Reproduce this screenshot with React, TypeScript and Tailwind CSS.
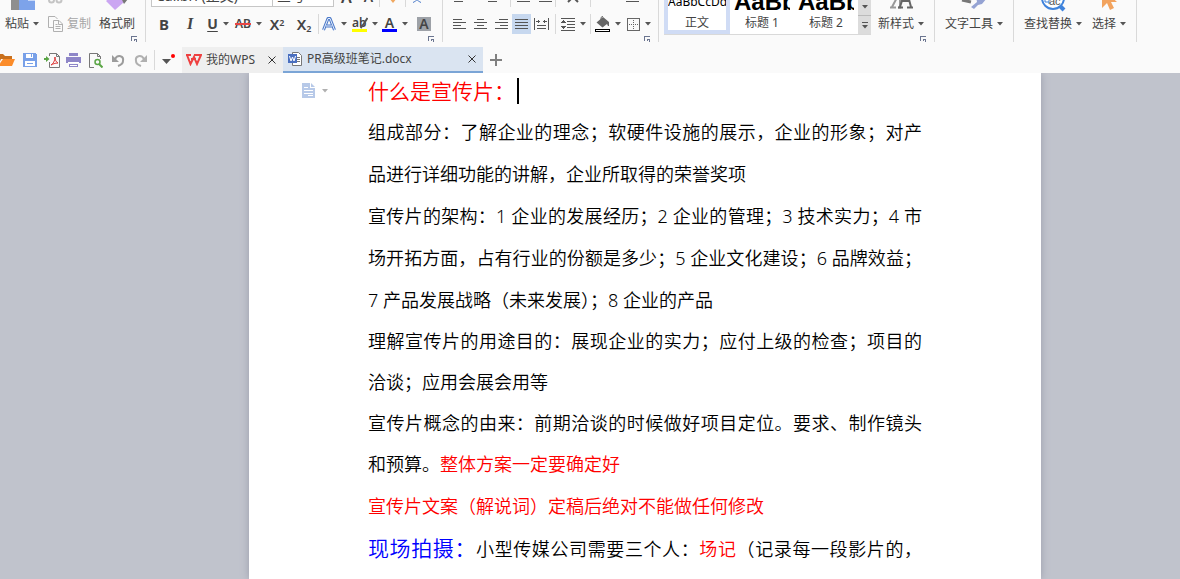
import clsx from 'clsx';
import type { ReactNode } from 'react';

const Arrow = ({ className = 'text-[#555]' }: { className?: string }) => (
  <svg width="6" height="4" viewBox="0 0 6 4" className={clsx('shrink-0', className)} aria-hidden="true">
    <path d="M0 0h6L3 3.5z" fill="currentColor" />
  </svg>
);

const Separator = () => <span className="h-5 w-px shrink-0 bg-[#d9d9d9]" />;

const Launcher = ({ label }: { label: string }) => (
  <button type="button" aria-label={label} className="flex h-2 w-2 items-start">
    <svg width="6" height="6" viewBox="0 0 6 6" fill="none" stroke="#6b7590" shapeRendering="crispEdges">
      <path d="M.5 5V.5H6M3 3.5h2.5V6M3.5 3v2" />
    </svg>
  </button>
);

type GroupProps = { children: ReactNode; className?: string; launcher?: string };

const Group = ({ children, className, launcher }: GroupProps) => (
  <section
    className={clsx(
      'flex h-[42px] shrink-0 flex-col justify-end overflow-hidden border-r border-[#d9d9d9]',
      className,
    )}
  >
    {children}
    <div className="flex h-2 shrink-0 justify-end pt-[2px] pr-[6px]">
      {launcher && <Launcher label={launcher} />}
    </div>
  </section>
);

type ToolProps = { label: string; children: ReactNode; className?: string; arrow?: boolean };

const Tool = ({ label, children, className = 'w-[21px]', arrow }: ToolProps) => (
  <button
    type="button"
    aria-label={label}
    className={clsx('flex h-5 shrink-0 items-center justify-center gap-[5px]', className)}
  >
    {children}
    {arrow && <Arrow />}
  </button>
);

const BigTool = ({ label, children, className, arrow }: ToolProps) => (
  <button type="button" className={clsx('flex shrink-0 flex-col items-center', className)}>
    <span className="flex h-[26px] items-start">{children}</span>
    <span className="flex h-5 items-center gap-1 whitespace-nowrap">
      {label}
      {arrow && <Arrow />}
    </span>
  </button>
);

const Lines = ({ rows }: { rows: [number, number][] }) => (
  <svg width="13" height="13" viewBox="0 0 13 13" stroke="#555" shapeRendering="crispEdges">
    {rows.map(([from, to], i) => (
      <path key={i} d={`M${from} ${i * 3 + 1.5}H${to}`} />
    ))}
  </svg>
);

const ClipboardGroup = () => (
  <Group className="w-[146px]" launcher="剪贴板">
    <div className="flex items-end pl-[5px]">
      <BigTool label="粘贴" arrow>
        <svg width="26" height="26" viewBox="0 0 26 26">
          <path d="M2 0h17v6h-9v16H2z" fill="#8f8f8f" />
          <path d="M10 7h9l7 6v9H10z" fill="#7da3ea" />
          <path d="M19 7v6h7z" fill="#c7d8f8" />
        </svg>
      </BigTool>
      <div className="ml-[9px] flex flex-col">
        <button type="button" aria-label="剪切" className="flex h-[22px] w-4 items-end pb-2">
          <svg width="15" height="12" viewBox="0 0 15 12" fill="none" stroke="#c4c4c4" strokeWidth="2">
            <circle cx="3.500" cy="6" r="2.500" />
            <circle cx="11" cy="6" r="2.500" />
            <path d="M5 5l5-5M10 5L5 0" />
          </svg>
        </button>
        <button type="button" className="flex h-5 items-center gap-1 text-[#a6a6a6]">
          <svg width="15" height="16" viewBox="0 0 15 16" fill="none" stroke="#b0b0b0">
            <path d="M5 11.500H.5V.5H7l2.500 2.500" />
            <path d="M5.500 4.500H11l3.500 3.500v7.500h-9zM10.500 4.500v4h4M7.500 8.500h2M7.500 10.500h5M7.500 12.500h5" />
          </svg>
          复制
        </button>
      </div>
      <BigTool label="格式刷" className="ml-2">
        <svg width="26" height="26" viewBox="0 0 26 26">
          <path d="M2 13l9-8 9 9-9 8z" fill="#cba6f2" />
          <path d="M17 10l4-3 3 4-4 5z" fill="#777" />
        </svg>
      </BigTool>
    </div>
  </Group>
);

const FontGroup = () => (
  <Group className="w-[297px]" launcher="字体">
    <div className="mb-[7px] flex shrink-0 items-end pl-[5px]">
      <select
        aria-label="字体名称"
        className="h-[22px] w-[122px] appearance-none border border-[#c6c6c6] bg-white pl-1 text-sm leading-5"
      >
        <option>Calibri (正文)</option>
      </select>
      <select
        aria-label="字号"
        className="-ml-px h-[22px] w-[62px] appearance-none border border-[#c6c6c6] bg-white pl-1 text-sm leading-5"
      >
        <option>三号</option>
      </select>
      <div className="ml-px flex items-end">
        <Tool label="增大字号" className="w-[23px]">
          <span className="text-base leading-5 font-semibold">A</span>
        </Tool>
        <Tool label="减小字号">
          <span className="text-sm leading-5 font-semibold">A</span>
        </Tool>
        <Separator />
        <Tool label="清除格式" className="w-[25px]">
          <svg width="12" height="14" viewBox="0 0 12 14">
            <path d="M2 8l4-4 4 4-4 5z" fill="#f0a860" />
          </svg>
        </Tool>
        <Separator />
        <Tool label="拼音指南">
          <svg width="10" height="12" viewBox="0 0 10 12" fill="none" stroke="#4a7ac9">
            <path d="M0 2h10M5 0v2M8 3C7 8 4 10 1 11.500M2 3c1 5 4 7 7 8.500" />
          </svg>
        </Tool>
      </div>
    </div>
    <div className="flex shrink-0 items-center pl-[5px]">
      <Tool label="加粗" className="w-[26px]">
        <span className="text-[15px] font-bold">B</span>
      </Tool>
      <Tool label="倾斜" className="w-[26px]">
        <span className="font-['Liberation_Serif',serif] text-base font-bold italic">I</span>
      </Tool>
      <Tool label="下划线" className="w-[30px]" arrow>
        <span className="text-sm font-bold underline underline-offset-2">U</span>
      </Tool>
      <Tool label="删除线" className="w-[31px]" arrow>
        <s className="text-xs font-semibold decoration-[#e84545] decoration-2">AB</s>
      </Tool>
      <Tool label="上标" className="w-[26px]">
        <span className="text-[15px] font-semibold">
          X<sup className="text-[9px]">2</sup>
        </span>
      </Tool>
      <Tool label="下标" className="w-[28px]">
        <span className="text-[15px] font-semibold">
          X<sub className="text-[9px]">2</sub>
        </span>
      </Tool>
      <Separator />
      <Tool label="文字效果" className="w-[31px]" arrow>
        <svg width="14" height="14" viewBox="0 0 14 14" fill="none" strokeLinejoin="round">
          <path d="M1.500 13L6 1.500h2L12.500 13M4 9h6" stroke="#4a78c8" strokeWidth="3" />
          <path d="M1.500 13L6 1.500h2L12.500 13M4 9h6" stroke="#e8f0fc" />
        </svg>
      </Tool>
      <Tool label="突出显示" className="w-[30px]" arrow>
        <span className="flex flex-col text-xs leading-3 font-semibold">
          <span className="flex w-[15px]">
            ab
            <svg width="8" height="12" viewBox="0 0 8 12" className="-ml-[7px] shrink-0">
              <path d="M7.500 1L3 8l-2.500 3" fill="none" stroke="#555" strokeWidth="2" />
            </svg>
          </span>
          <span className="h-[3px] w-[15px] bg-[#ffff00]" />
        </span>
      </Tool>
      <Tool label="字体颜色" className="w-[30px]" arrow>
        <span className="flex flex-col items-center text-sm leading-3 font-semibold">
          A
          <span className="h-[3px] w-[15px] bg-[#0000ff]" />
        </span>
      </Tool>
      <Tool label="字符底纹" className="w-[28px]">
        <span className="h-[14px] w-[14px] bg-[#9da1a7] text-sm leading-[14px] font-semibold">A</span>
      </Tool>
    </div>
  </Group>
);

const ParagraphGroup = () => (
  <Group className="w-[216px]" launcher="段落">
    <div className="mb-[7px] flex shrink-0 items-center">
      <Tool label="项目符号" className="w-[27px]">
        <Lines rows={[[0, 13], [0, 2], [0, 2], [4, 13]]} />
      </Tool>
      <Tool label="编号" className="w-10">
        <Lines rows={[[0, 13], [0, 2], [0, 2], [4, 13]]} />
      </Tool>
      <Separator />
      <Tool label="减少缩进" className="w-6">
        <Lines rows={[[0, 13], [4, 13], [4, 13], [0, 13]]} />
      </Tool>
      <Tool label="增加缩进" className="w-5">
        <Lines rows={[[0, 13], [4, 13], [4, 13], [0, 13]]} />
      </Tool>
      <Separator />
      <Tool label="中文版式" className="w-[34px]">
        <svg width="12" height="12" viewBox="0 0 12 12" fill="none" stroke="#555" strokeWidth="2">
          <path d="M1 1h10M9 3L1 11M3 3l8 8" />
        </svg>
      </Tool>
      <Separator />
      <Tool label="显示段落标记" className="w-[83px]">
        <Lines rows={[[0, 1], [0, 1], [0, 1], [0, 13]]} />
      </Tool>
    </div>
    <div className="flex shrink-0 items-center pl-[6px]">
      <Tool label="左对齐">
        <Lines rows={[[0, 9], [0, 13], [0, 8], [0, 13]]} />
      </Tool>
      <Tool label="居中">
        <Lines rows={[[3, 10], [0, 13], [3, 10], [0, 13]]} />
      </Tool>
      <Tool label="右对齐">
        <Lines rows={[[4, 13], [0, 13], [5, 13], [0, 13]]} />
      </Tool>
      <Tool label="两端对齐" className="w-[19px] bg-[#c7d8ef]">
        <Lines rows={[[0, 13], [0, 13], [0, 13], [0, 13]]} />
      </Tool>
      <Tool label="分散对齐" className="w-[21px]">
        <svg width="15" height="12" viewBox="0 0 15 12" stroke="#555" fill="#555" shapeRendering="crispEdges">
          <path d="M.5 0v12M14.500 0v12M2 3.500h4M9 3.500h4M3 7.500h9M3 10.500h9" />
          <path d="M5 1.500v4L2.500 3.500zM10 1.500v4l2.500-2z" stroke="none" />
        </svg>
      </Tool>
      <span className="w-[3px]" />
      <Separator />
      <Tool label="行距" className="w-[34px]" arrow>
        <svg width="14" height="13" viewBox="0 0 14 13" stroke="#555" fill="#555" shapeRendering="crispEdges">
          <path d="M0 .5h14M6 3.500h8M6 6.500h8M6 9.500h8M0 12.500h14" />
          <path d="M0 5l2.500-3L5 5zM0 8l2.500 3L5 8z" stroke="none" />
        </svg>
      </Tool>
      <Separator />
      <Tool label="底纹颜色" className="w-[33px]" arrow>
        <svg width="15" height="16" viewBox="0 0 15 16">
          <path d="M1.500 6.500L8 1l6 5v4h-1l-1-2-4.500 3.500z" fill="#666" />
          <path d="M6 5V1.500l2-1.500" stroke="#666" fill="none" />
          <path d="M.5 13.500h14v2H.5z" stroke="#000" fill="#fff" shapeRendering="crispEdges" />
        </svg>
      </Tool>
      <Tool label="边框" className="w-[29px]" arrow>
        <svg width="13" height="13" viewBox="0 0 13 13" fill="none" stroke="#666" shapeRendering="crispEdges">
          <path d="M.5.5h12v12H.5z" />
          <path d="M6.500 2v10M2 6.500h10" strokeDasharray="1 1" />
        </svg>
      </Tool>
    </div>
  </Group>
);

const STYLES = [
  { name: '正文', sample: 'AaBbCcDd', selected: true },
  { name: '标题 1', sample: 'AaBb', selected: false },
  { name: '标题 2', sample: 'AaBb(', selected: false },
];

const StylesGroup = () => (
  <Group className="w-[276px]" launcher="样式">
    <div className="flex shrink-0 items-end gap-1 pl-[5px]">
      <div className="-mb-px flex h-[55px] border-b border-[#d9d9d9] bg-white">
        {STYLES.map((s) => (
          <button
            key={s.name}
            type="button"
            className={clsx(
              'flex flex-col items-center justify-end overflow-hidden border-4 whitespace-nowrap',
              s.selected ? 'w-[66px] border-[#d0dcf5]' : 'w-16 border-white',
            )}
          >
            <span
              className={clsx(
                'w-full overflow-hidden text-left text-black',
                s.selected
                  ? 'mb-1 text-xs leading-5'
                  : 'mb-[2px] font-["Liberation_Sans",sans-serif] text-2xl leading-6 font-bold',
              )}
            >
              {s.sample}
            </span>
            <span className="leading-[14px]">{s.name}</span>
          </button>
        ))}
        <div className="flex w-[13px] flex-col bg-[#dcdcdc]">
          <button type="button" aria-label="下一行" className="flex flex-1 items-end justify-center border-b border-[#bbb] pb-[6px]">
            <Arrow />
          </button>
          <button type="button" aria-label="更多样式" className="flex h-[18px] flex-col items-center justify-center gap-[2px]">
            <span className="h-px w-[6px] bg-[#555]" />
            <Arrow />
          </button>
        </div>
      </div>
      <BigTool label="新样式" className="ml-[3px]" arrow>
        <svg width="26" height="26" viewBox="0 0 26 26" fill="none">
          <path d="M2 19.500h6M10 19.500h3M4 19L12 4v15" stroke="#999" strokeWidth="2" />
          <path d="M10 19.500h5M19 19.500h6M12 19L18 0l5 19" stroke="#666" strokeWidth="2" />
          <path d="M14 13h7" stroke="#666" strokeWidth="2" />
        </svg>
      </BigTool>
    </div>
  </Group>
);

const Ribbon = () => (
  <div className="flex h-[47px] overflow-hidden" role="toolbar" aria-label="开始">
    <ClipboardGroup />
    <FontGroup />
    <ParagraphGroup />
    <StylesGroup />
    <Group className="w-[79px]">
      <BigTool label="文字工具" className="self-center" arrow>
        <svg width="26" height="26" viewBox="0 0 26 26">
          <path d="M1 12l9 2" stroke="#777" strokeWidth="3" />
          <path d="M10 19l6-5-1-6 6 1 4-4 1 5-5 6-4 1-4 4z" fill="#95a3d3" />
        </svg>
      </BigTool>
    </Group>
    <Group className="w-[123px]">
      <div className="flex items-end gap-[10px] pl-[10px]">
        <BigTool label="查找替换" arrow>
          <svg width="28" height="26" viewBox="0 0 28 26">
            <circle cx="14" cy="10" r="11" fill="#fff" stroke="#3f83dc" strokeWidth="2" />
            <path d="M21 18l4 4" stroke="#3f83dc" strokeWidth="4" />
            <path d="M6 10v4h4M10 11v5" stroke="#3f83dc" fill="none" />
            <text x="10" y="17" fontSize="11" fontFamily="Liberation Sans" fill="#555">
              ac
            </text>
          </svg>
        </BigTool>
        <BigTool label="选择" arrow>
          <svg width="18" height="26" viewBox="0 0 18 26">
            <path d="M2 0v20l5-5 3 7 4-2-3-6h6z" fill="#f2a35e" />
          </svg>
        </BigTool>
      </div>
    </Group>
  </div>
);

const QuickAccess = () => (
  <div className="flex shrink-0 items-center">
    <Tool label="打开" className="w-[15px]">
      <svg width="15" height="12" viewBox="0 0 15 12">
        <path d="M-2 0h5l2 2h7v3H1l-3 7z" fill="#c9701d" />
        <path d="M3 5h12l-3 7h-14z" fill="#fb8c2a" />
      </svg>
    </Tool>
    <Tool label="保存" className="w-[29px]">
      <svg width="14" height="14" viewBox="0 0 14 14" shapeRendering="crispEdges">
        <path d="M0 0h12l2 2v12H0z" fill="#78a0e8" />
        <path d="M3 1h7v4H3zM2 8h10v5H2z" fill="#fff" />
        <path d="M8 1h1v3H8zM4 10h6v1H4z" fill="#78a0e8" />
      </svg>
    </Tool>
    <Tool label="输出为PDF" className="w-[17px]">
      <svg width="17" height="15" viewBox="0 0 17 15" fill="none">
        <path d="M5.500 3V.5h7l3 3v11h-10V9M12.500.5v3h3" stroke="#777" />
        <path d="M0 5h2V3l3.500 3L2 9V7H0z" fill="#5aa545" />
        <path d="M7 12c2-1 4-4 4-8 0 3 1 5 3 6-3 0-5 1-7 2z" stroke="#dd3838" />
      </svg>
    </Tool>
    <Tool label="打印" className="w-[25px]">
      <svg width="15" height="14" viewBox="0 0 15 14" shapeRendering="crispEdges">
        <path d="M3 0h9v3H3zM0 4h15v6H0zM3 11h9v3H3z" fill="#8e86c8" />
        <path d="M2 9h11v1H2zM4 12h7v1H4z" fill="#fff" />
      </svg>
    </Tool>
    <Tool label="打印预览" className="w-[19px]">
      <svg width="14" height="15" viewBox="0 0 14 15" fill="none">
        <path d="M5 14.500H.5V.5h8l3 3V6M8.500.5v3h3" stroke="#777" />
        <circle cx="8.500" cy="9" r="2.500" stroke="#5aa545" strokeWidth="1.500" />
        <path d="M10 11l3.500 3.500" stroke="#5aa545" strokeWidth="2" />
      </svg>
    </Tool>
    <Tool label="撤销" className="w-[26px]">
      <svg width="13" height="13" viewBox="0 0 13 13" fill="none">
        <path d="M3 5c3-5 9-3 8 2 0 2-2 4-5 5" stroke="#9c9c9c" strokeWidth="2" />
        <path d="M0 1v7h7z" fill="#9c9c9c" />
      </svg>
    </Tool>
    <Tool label="恢复" className="mr-[5px] w-[18px]">
      <svg width="13" height="13" viewBox="0 0 13 13" fill="none">
        <path d="M10 5C7 0 1 2 2 7c0 2 2 4 5 5" stroke="#b0b0b0" strokeWidth="2" />
        <path d="M13 1v7H6z" fill="#b0b0b0" />
      </svg>
    </Tool>
    <Separator />
    <Tool label="自定义快速访问工具栏" className="w-[27px]">
      <svg width="13" height="12" viewBox="0 0 13 12">
        <path d="M0 5h9l-4.500 5z" fill="#555" />
        <circle cx="11" cy="2" r="2" fill="#f00" />
      </svg>
    </Tool>
  </div>
);

const CloseIcon = () => (
  <svg width="8" height="8" viewBox="0 0 8 8" stroke="#333">
    <path d="M.5.5l7 7M7.500.5l-7 7" />
  </svg>
);

const TabBar = () => (
  <div className="flex h-[26px] items-stretch">
    <QuickAccess />
    <div className="flex w-[101px] shrink-0 items-center bg-[#efefef] pl-1">
      <a href="#home" className="flex items-center gap-1 whitespace-nowrap">
        <svg width="16" height="12" viewBox="0 0 16 12" fill="none" stroke="#ee4040" strokeWidth="2">
          <path d="M0 1h5M1 1l3.500 9L8 3l3 7 4-9H8M5 5h5" />
        </svg>
        我的WPS
      </a>
      <button type="button" aria-label="关闭我的WPS" className="mr-[7px] ml-auto">
        <CloseIcon />
      </button>
    </div>
    <div className="flex w-[200px] shrink-0 items-center border-b-2 border-[#7ba5d6] bg-[#dae4f1] pl-[5px]">
      <a href="#document" className="flex items-center gap-1 whitespace-nowrap">
        <svg width="15" height="14" viewBox="0 0 15 14" fill="none">
          <path d="M4.500.5h6l3 3v10h-9z" fill="#fff" stroke="#777" />
          <path d="M9 5.500h3M9 7.500h3M9 9.500h3" stroke="#777" />
          <path d="M0 2h9v9H0z" fill="#4a6fc0" />
          <path d="M1.500 4l1.500 5 1.500-4L6 9l1.500-5" stroke="#fff" />
        </svg>
        PR高级班笔记.docx
      </a>
      <button type="button" aria-label="关闭文档" className="mr-[7px] ml-auto">
        <CloseIcon />
      </button>
    </div>
    <button type="button" aria-label="新建" className="flex w-[26px] items-center justify-center">
      <svg width="12" height="12" viewBox="0 0 12 12" stroke="#808080" strokeWidth="2">
        <path d="M6 0v12M0 6h12" />
      </svg>
    </button>
  </div>
);

const Document = () => (
  <main className="flex flex-1 overflow-hidden bg-[#c0c3cc]">
    <article className="relative mr-[139px] ml-[249px] flex-1 bg-white px-[119px] text-justify font-['Noto_Sans','Noto_Sans_CJK_SC',sans-serif] text-lg leading-[42px] font-[350] text-black shadow-[0_0_8px_#9a9dab]">
      <button type="button" aria-label="段落布局" className="absolute top-[10px] left-[53px] flex items-center gap-[7px]">
        <svg width="13" height="15" viewBox="0 0 13 15">
          <path d="M0 0h8v5h5v10H0zM9 0l4 4H9z" fill="#b7c9e8" />
          <path d="M2 4.500h4M2 7.500h9M2 10.500h9M6 12.500h5" stroke="#fff" />
        </svg>
        <Arrow className="text-[#b0b0b0]" />
      </button>
      <h1 className="flex h-[38px] items-center pb-[2px] text-[21px] text-[#ff0000]">
        什么是宣传片：
        <span className="ml-[2px] h-[26px] w-[2px] bg-black" />
      </h1>
      <p>
        组成部分：了解企业的理念；软硬件设施的展示，企业的形象；对产品进行详细功能的讲解，企业所取得的荣誉奖项
      </p>
      <p>
        宣传片的架构：1 企业的发展经历；2 企业的管理；3 技术实力；4 市场开拓方面，占有行业的份额是多少；5 企业文化建设；6 品牌效益；7 产品发展战略（未来发展）；8 企业的产品
      </p>
      <p className="leading-[41px]">理解宣传片的用途目的：展现企业的实力；应付上级的检查；项目的洽谈；应用会展会用等</p>
      <p className="leading-[41px]">
        宣传片概念的由来：前期洽谈的时候做好项目定位。要求、制作镜头和预算。
        <span className="text-[#ff0000]">整体方案一定要确定好</span>
      </p>
      <p className="text-[#ff0000]">宣传片文案（解说词）定稿后绝对不能做任何修改</p>
      <p className="[text-align-last:justify]">
        <span className="text-[21px] text-[#0000ff]">现场拍摄：</span>
        小型传媒公司需要三个人：<span className="text-[#ff0000]">场记</span>（记录每一段影片的，
      </p>
    </article>
  </main>
);

const App = () => (
  <div
    lang="zh-CN"
    className="flex min-h-screen flex-col bg-[#fafafa] font-['Noto_Sans','Noto_Sans_CJK_SC',sans-serif] text-xs text-[#444]"
  >
    <Ribbon />
    <TabBar />
    <Document />
  </div>
);

export default App;
